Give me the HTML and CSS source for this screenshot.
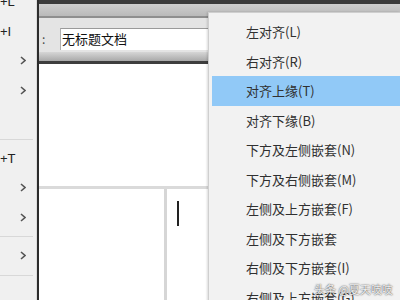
FILE: index.html
```html
<!DOCTYPE html>
<html>
<head>
<meta charset="utf-8">
<link rel="stylesheet" href="styles.css">
</head>
<body>
<div class="screen">
  <div class="left">
    <div class="litem first"><span class="sc">+L</span></div>
    <div class="litem"><span class="sc">+I</span></div>
    <div class="litem"><svg class="chev" viewBox="0 0 6 9"><polyline points="1,1 5,4.5 1,8"/></svg></div>
    <div class="litem"><svg class="chev" viewBox="0 0 6 9"><polyline points="1,1 5,4.5 1,8"/></svg></div>
    <div class="litem"></div>
    <div class="lsep"></div>
    <div class="litem"><span class="sc">+T</span></div>
    <div class="litem"><svg class="chev" viewBox="0 0 6 9"><polyline points="1,1 5,4.5 1,8"/></svg></div>
    <div class="litem"><svg class="chev" viewBox="0 0 6 9"><polyline points="1,1 5,4.5 1,8"/></svg></div>
    <div class="lsep"></div>
    <div class="litem"><svg class="chev" viewBox="0 0 6 9"><polyline points="1,1 5,4.5 1,8"/></svg></div>
    <div class="lsep"></div>
  </div>
  <div class="frame">
    <div class="topbar"></div>
    <div class="band1"></div>
    <div class="line1"></div>
    <div class="titlerow">
      <span class="label">:</span>
      <div class="input">无标题文档</div>
    </div>
    <div class="band2"></div>
    <div class="line2"></div>
    <div class="doc"></div>
    <div class="hline"></div>
    <div class="bottom">
      <div class="col"></div>
      <div class="vline"></div>
      <div class="col2"><div class="cursor"></div></div>
    </div>
  </div>
  <div class="menu">
    <div class="mitem">左对齐(L)</div>
    <div class="mitem">右对齐(R)</div>
    <div class="mitem active">对齐上缘(T)</div>
    <div class="mitem">对齐下缘(B)</div>
    <div class="mitem">下方及左侧嵌套(N)</div>
    <div class="mitem">下方及右侧嵌套(M)</div>
    <div class="mitem">左侧及上方嵌套(F)</div>
    <div class="mitem">左侧及下方嵌套</div>
    <div class="mitem">右侧及下方嵌套(I)</div>
    <div class="mitem">右侧及上方嵌套(G)</div>
  </div>
  <div class="watermark">头条 @夏天吱吱</div>
</div>
</body>
</html>
```
FILE: styles.css
```css
html, body {
  margin: 0;
  padding: 0;
}
body {
  width: 400px;
  height: 300px;
  overflow: hidden;
  font-family: "Noto Sans CJK SC", "Noto Sans", sans-serif;
}
.screen {
  position: relative;
  width: 400px;
  height: 300px;
  display: flex;
  overflow: hidden;
  background: #fff;
}
.left {
  width: 36px;
  flex: none;
  background: #f0f0f0;
  border-right: 1px solid #dcdcdc;
  display: flex;
  flex-direction: column;
}
.litem {
  height: 29.5px;
  flex: none;
  display: flex;
  align-items: center;
  padding-left: 20px;
  position: relative;
}
.litem.first {
  margin-top: -13px;
}
.sc {
  position: absolute;
  left: 0;
  font-family: "Liberation Sans", sans-serif;
  font-size: 13px;
  color: #222;
}
.chev {
  width: 6px;
  height: 9px;
}
.chev polyline {
  fill: none;
  stroke: #555;
  stroke-width: 1.6;
}
.lsep {
  height: 9px;
  flex: none;
  display: flex;
  align-items: center;
  margin-right: 3px;
}
.lsep::after {
  content: "";
  display: block;
  width: 100%;
  height: 1px;
  background: #d8d8d8;
}
.frame {
  flex: 1;
  display: flex;
  flex-direction: column;
  border-left: 2px solid #2c2c2c;
}
.topbar {
  height: 4px;
  background: #3c3c3c;
}
.band1 {
  height: 12px;
  background: linear-gradient(#cfcfcf, #b9b9b9);
}
.line1 {
  height: 2px;
  background: #8e8e8e;
}
.titlerow {
  height: 34px;
  background: #e4e4e4;
  display: flex;
  align-items: flex-start;
  padding-top: 10px;
  box-sizing: border-box;
}
.label {
  width: 18px;
  padding-left: 3px;
  font-size: 12px;
  line-height: 22px;
  color: #444;
}
.input {
  width: 200px;
  height: 22px;
  box-sizing: border-box;
  background: #fff;
  border-top: 1px solid #9a9a9a;
  border-left: 1px solid #b0b0b0;
  font-size: 13px;
  line-height: 20px;
  padding-left: 1px;
  color: #111;
}
.band2 {
  height: 9px;
  background: linear-gradient(#d6d6d6, #a9a9a9);
}
.line2 {
  height: 3px;
  background: #3e3e3e;
}
.doc {
  height: 122px;
  background: #fff;
}
.hline {
  height: 3px;
  background: #dadada;
}
.bottom {
  flex: 1;
  display: flex;
}
.col {
  width: 125px;
}
.vline {
  width: 3px;
  background: #d6d6d6;
}
.col2 {
  flex: 1;
  padding-left: 10px;
  padding-top: 12px;
}
.cursor {
  width: 2px;
  height: 25px;
  background: #222;
}
.menu {
  position: absolute;
  left: 208px;
  top: 12px;
  width: 192px;
  height: 300px;
  box-sizing: border-box;
  background: #f2f2f2;
  border-left: 1px solid #cfcfcf;
  border-top: 1px solid #cfcfcf;
  box-shadow: -1px 0 2px rgba(0,0,0,0.15);
  padding: 4px 0 0 3px;
}
.mitem {
  height: 29.5px;
  line-height: 29.5px;
  padding-left: 34px;
  font-size: 13px;
  color: #303030;
  white-space: nowrap;
}
.mitem.active {
  background: #91c9f7;
}
.watermark {
  position: absolute;
  left: 314px;
  top: 282px;
  font-size: 11px;
  line-height: 14px;
  color: rgba(255,255,255,0.92);
  text-shadow: 0 0 2px rgba(0,0,0,0.6), 0 0 1px rgba(0,0,0,0.5);
  white-space: nowrap;
}
```
